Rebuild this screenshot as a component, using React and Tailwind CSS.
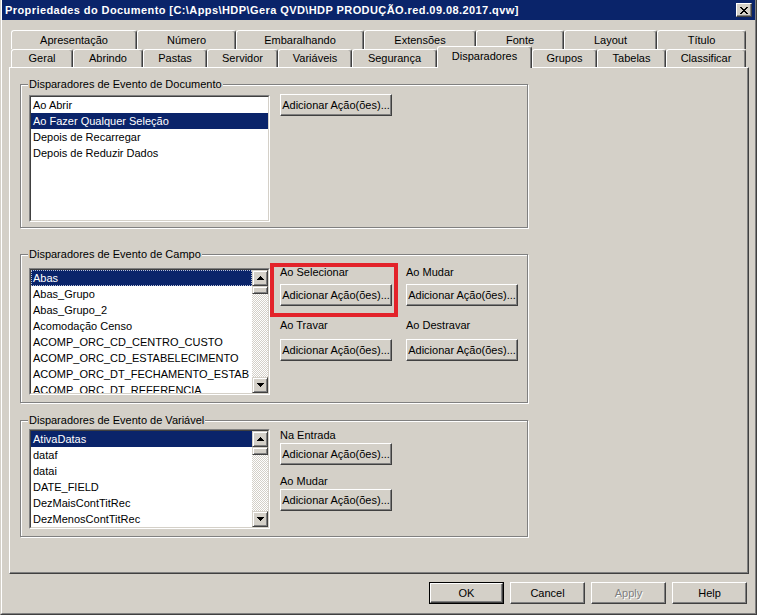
import React from "react";

const tabs1 = [
  ["Apresentação", "w-[126px]"],
  ["Número", "w-[99px]"],
  ["Embaralhando", "w-[128px]"],
  ["Extensões", "w-[112px]"],
  ["Fonte", "w-[88px]"],
  ["Layout", "w-[93px]"],
  ["Título", "w-[89px]"],
];

const tabs2 = [
  ["Geral", "w-[62px]"],
  ["Abrindo", "w-[70px]"],
  ["Pastas", "w-[64px]"],
  ["Servidor", "w-[71px]"],
  ["Variáveis", "w-[74px]"],
  ["Segurança", "w-[85px]"],
  ["Disparadores", "w-[95px]", true],
  ["Grupos", "w-[65px]"],
  ["Tabelas", "w-[69px]"],
  ["Classificar", "w-[80px]"],
];

function Tab({ label, w, selected }) {
  return (
    <div
      className={`${w} ${
        selected ? "relative z-10 -mt-[3px] h-[22px] pb-[2px]" : "h-full"
      } shrink-0 bg-[#d4d0c8] border-t border-l border-r border-t-white border-l-white border-r-[#404040] rounded-t-[3px] shadow-[inset_-1px_0_0_#808080] flex items-center justify-center whitespace-nowrap`}
    >
      {label}
    </div>
  );
}

function Button({ children, className = "", disabled = false }) {
  return (
    <div
      className={`flex items-center justify-center bg-[#d4d0c8] border border-t-white border-l-white border-r-[#404040] border-b-[#404040] shadow-[inset_-1px_-1px_0_#808080] whitespace-nowrap ${
        disabled ? "text-[#808080] [text-shadow:1px_1px_0_#ffffff]" : ""
      } ${className}`}
    >
      {children}
    </div>
  );
}

function Arrow({ down }) {
  return (
    <svg width="7" height="4" viewBox="0 0 7 4" shapeRendering="crispEdges">
      {down ? (
        <path d="M0 0H7L3.5 4Z" fill="#000" />
      ) : (
        <path d="M3.5 0L7 4H0Z" fill="#000" />
      )}
    </svg>
  );
}

function SbBtn({ down }) {
  return (
    <div className="h-[16px] w-[16px] shrink-0 flex items-center justify-center bg-[#d4d0c8] border border-t-[#d4d0c8] border-l-[#d4d0c8] border-r-[#404040] border-b-[#404040] shadow-[inset_1px_1px_0_#ffffff,inset_-1px_-1px_0_#808080]">
      <Arrow down={down} />
    </div>
  );
}

function ScrollBar() {
  return (
    <div className="w-[16px] h-full shrink-0 flex flex-col">
      <SbBtn />
      <div className="h-[8px] w-[16px] shrink-0 bg-[#d4d0c8] border border-t-[#d4d0c8] border-l-[#d4d0c8] border-r-[#404040] border-b-[#404040] shadow-[inset_1px_1px_0_#ffffff,inset_-1px_-1px_0_#808080]" />
      <div className="flex-1 bg-[image:repeating-conic-gradient(#d4d0c8_0_25%,#ffffff_0_50%)] bg-[length:2px_2px]" />
      <SbBtn down />
    </div>
  );
}

function ListBox({ items, selected, focus, scroll, className = "" }) {
  return (
    <div
      className={`shrink-0 border border-t-[#808080] border-l-[#808080] border-r-white border-b-white ${className}`}
    >
      <div className="h-full flex bg-white border border-t-[#404040] border-l-[#404040] border-r-[#d4d0c8] border-b-[#d4d0c8] overflow-hidden">
        <div className="flex-1 flex flex-col overflow-hidden">
          {items.map((it, i) => (
            <div
              key={i}
              className={`h-[16px] shrink-0 leading-[14px] pl-[1px] whitespace-nowrap border ${
                i === selected
                  ? `bg-[#0a246a] text-white ${
                      focus ? "border-dotted border-[#b8c0d8]" : "border-transparent"
                    }`
                  : "border-transparent"
              }`}
            >
              {it}
            </div>
          ))}
        </div>
        {scroll && <ScrollBar />}
      </div>
    </div>
  );
}

function Group({ label, className = "", children }) {
  return (
    <div
      className={`relative w-[508px] shrink-0 border border-[#808080] shadow-[inset_1px_1px_0_#ffffff,1px_1px_0_#ffffff] ${className}`}
    >
      <span className="absolute left-[7px] -top-[7px] px-[1px] bg-[#d4d0c8] leading-[13px] whitespace-nowrap">
        {label}
      </span>
      {children}
    </div>
  );
}

function ActionCell({ label, labelGap }) {
  return (
    <div className="flex flex-col w-[112px]">
      <div className="h-[13px] leading-[13px] whitespace-nowrap">{label}</div>
      <Button className={`h-[22px] w-[112px] ${labelGap}`}>Adicionar Ação(ões)...</Button>
    </div>
  );
}

export default function App() {
  return (
    <div className="w-[757px] h-[615px] bg-[#d4d0c8] font-['Liberation_Sans',Arial,sans-serif] text-[11px] text-black overflow-hidden select-none">
      <div className="w-full h-full flex flex-col border-l border-l-[#d4d0c8] border-r border-r-[#404040] border-b border-b-[#404040]">
        <div className="flex-1 flex flex-col border-l border-l-white border-r border-r-[#808080] border-b border-b-[#808080]">
          {/* Title bar */}
          <div className="h-[20px] shrink-0 bg-[#0a246a] flex items-center pl-[3px] pr-[3px]">
            <span className="flex-1 text-white font-bold text-[11px] tracking-[0.42px] whitespace-nowrap">
              Propriedades do Documento [C:\Apps\HDP\Gera QVD\HDP PRODUÇÃO.red.09.08.2017.qvw]
            </span>
            <div className="w-[16px] h-[14px] flex items-center justify-center bg-[#d4d0c8] border border-t-white border-l-white border-r-[#404040] border-b-[#404040] shadow-[inset_-1px_-1px_0_#808080]">
              <svg width="8" height="7" viewBox="0 0 8 7" shapeRendering="crispEdges">
                <path
                  d="M0 0h2v1h1v1h2v-1h1v-1h2v1h-1v1h-1v1h-1v1h1v1h1v1h1v1h-2v-1h-1v-1h-2v1h-1v1h-2v-1h1v-1h1v-1h1v-1h-1v-1h-1v-1h-1z"
                  fill="#000"
                />
              </svg>
            </div>
          </div>

          {/* Body */}
          <div className="flex-1 flex flex-col pl-[7px] pr-[6px]">
            {/* Tabs */}
            <div className="mt-[10px] pl-[2px] flex flex-col">
              <div className="h-[19px] flex">
                {tabs1.map(([l, w]) => (
                  <Tab key={l} label={l} w={w} />
                ))}
              </div>
              <div className="h-[18px] flex">
                {tabs2.map(([l, w, s]) => (
                  <Tab key={l} label={l} w={w} selected={s} />
                ))}
              </div>
            </div>

            {/* Panel */}
            <div className="h-[507px] shrink-0 flex flex-col pl-[10px] pt-[16px] border-t border-l border-t-white border-l-white border-r border-b border-r-[#404040] border-b-[#404040] shadow-[inset_-1px_-1px_0_#808080]">
              {/* Group 1 */}
              <Group label="Disparadores de Evento de Documento" className="h-[144px]">
                <div className="flex items-start pl-[8px] pt-[10px]">
                  <ListBox
                    className="w-[241px] h-[127px]"
                    items={[
                      "Ao Abrir",
                      "Ao Fazer Qualquer Seleção",
                      "Depois de Recarregar",
                      "Depois de Reduzir Dados",
                    ]}
                    selected={1}
                  />
                  <Button className="ml-[10px] -mt-[1px] h-[22px] w-[112px]">
                    Adicionar Ação(ões)...
                  </Button>
                </div>
              </Group>

              {/* Group 2 */}
              <Group label="Disparadores de Evento de Campo" className="mt-[26px] h-[149px]">
                <div className="flex items-start pl-[8px]">
                  <ListBox
                    className="mt-[13px] w-[241px] h-[127px]"
                    items={[
                      "Abas",
                      "Abas_Grupo",
                      "Abas_Grupo_2",
                      "Acomodação Censo",
                      "ACOMP_ORC_CD_CENTRO_CUSTO",
                      "ACOMP_ORC_CD_ESTABELECIMENTO",
                      "ACOMP_ORC_DT_FECHAMENTO_ESTAB",
                      "ACOMP_ORC_DT_REFERENCIA",
                    ]}
                    selected={0}
                    focus
                    scroll
                  />
                  <div className="ml-[10px] mt-[11px] flex flex-col">
                    <div className="flex gap-[14px]">
                      <ActionCell label="Ao Selecionar" labelGap="mt-[5px]" />
                      <ActionCell label="Ao Mudar" labelGap="mt-[5px]" />
                    </div>
                    <div className="flex gap-[14px] mt-[13px]">
                      <ActionCell label="Ao Travar" labelGap="mt-[7px]" />
                      <ActionCell label="Ao Destravar" labelGap="mt-[7px]" />
                    </div>
                  </div>
                </div>
                <div className="absolute left-[249px] top-[8px] w-[128px] h-[54px] border-[4px] border-[#e3232a]" />
              </Group>

              {/* Group 3 */}
              <Group label="Disparadores de Evento de Variável" className="mt-[17px] h-[117px]">
                <div className="flex items-start pl-[8px]">
                  <ListBox
                    className="mt-[8px] w-[241px] h-[100px]"
                    items={[
                      "AtivaDatas",
                      "dataf",
                      "datai",
                      "DATE_FIELD",
                      "DezMaisContTitRec",
                      "DezMenosContTitRec",
                    ]}
                    selected={0}
                    scroll
                  />
                  <div className="ml-[10px] mt-[8px] flex flex-col">
                    <ActionCell label="Na Entrada" labelGap="mt-[1px]" />
                    <div className="mt-[10px]">
                      <ActionCell label="Ao Mudar" labelGap="mt-[1px]" />
                    </div>
                  </div>
                </div>
              </Group>
            </div>

            {/* Bottom buttons */}
            <div className="mt-[8px] pr-[2px] flex justify-end gap-[6px]">
              <div className="border border-black">
                <Button className="w-[73px] h-[20px]">OK</Button>
              </div>
              <Button className="w-[75px] h-[22px]">Cancel</Button>
              <Button className="w-[75px] h-[22px]" disabled>
                Apply
              </Button>
              <Button className="w-[75px] h-[22px]">Help</Button>
            </div>
          </div>
        </div>
      </div>
    </div>
  );
}
